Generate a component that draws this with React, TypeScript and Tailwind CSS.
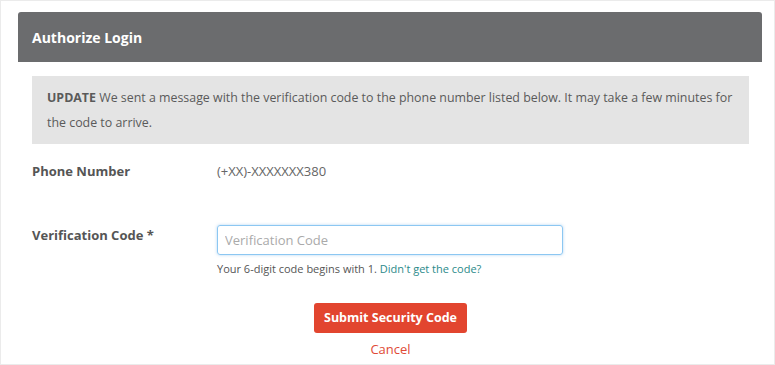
export default function App() {
  return (
    <div
      className="w-[775px] h-[365px] bg-white border border-[#ebebeb] overflow-hidden"
      style={{ fontFamily: '"Open Sans", "Liberation Sans", sans-serif' }}
    >
      <div className="ml-[17px] mt-[11px] w-[744px]">
        <div className="h-[50px] bg-[#6b6c6e] rounded-t-[3px] flex items-center px-[14px]">
          <h1 className="text-white font-bold text-[14px]">Authorize Login</h1>
        </div>

        <div className="pl-[14px] pr-[13px] pt-[14px]">
          <div className="bg-[#e4e4e4] pl-[15px] pr-[10px] py-[9px] text-[12.4px] leading-[25px] text-[#5a5a5a]">
            <span className="font-bold">UPDATE</span> We sent a message with the verification code to the phone
            number listed below. It may take a few minutes for the code to arrive.
          </div>

          <div className="flex items-center mt-[18px] text-[13px]">
            <div className="w-[185px] font-bold text-[#555]">Phone Number</div>
            <div className="text-[#666]">(+XX)-XXXXXXX380</div>
          </div>

          <div className="flex mt-[43px]">
            <div className="w-[185px] pt-[1px] text-[13px] font-bold text-[#555]">Verification Code *</div>
            <div>
              <input
                placeholder="Verification Code"
                className="w-[346px] h-[30px] px-[7px] text-[13px] rounded-[3px] border border-[#8cc7f2] shadow-[0_0_3px_rgba(100,170,230,0.5)] outline-none placeholder:text-[#aaa]"
              />
              <p className="mt-[6px] text-[11px] text-[#555]">
                Your 6-digit code begins with 1. <a className="text-[#2b8a8a]">Didn't get the code?</a>
              </p>
            </div>
          </div>

          <div className="flex flex-col items-center mt-[26px]">
            <button className="h-[30px] px-[10px] rounded-[3px] bg-[#e2452f] text-white font-bold text-[12.5px]">
              Submit Security Code
            </button>
            <a className="mt-[7px] text-[13px] text-[#e04a36]">Cancel</a>
          </div>
        </div>
      </div>
    </div>
  )
}
